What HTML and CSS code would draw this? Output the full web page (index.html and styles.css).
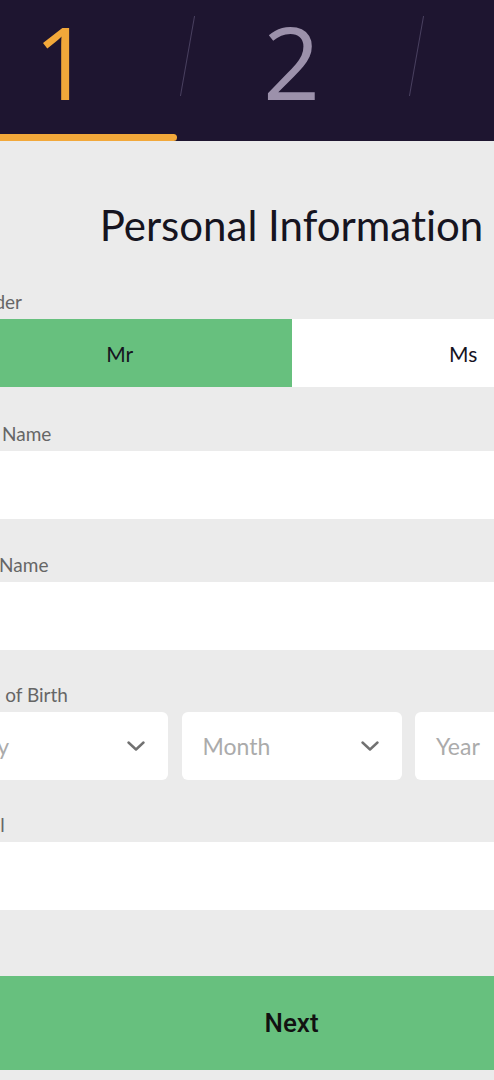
FILE: index.html
```html
<!DOCTYPE html>
<html lang="en">

<head>
    <meta charset="UTF-8">
    <meta name="viewport" content="width=device-width, initial-scale=1.0">
    <title>Registration</title>
    <link rel="stylesheet" href="styles.css">
</head>

<body>

    <header class="stepbar">
        <div class="steps">
            <div class="step active">1</div>
            <div class="step">2</div>
            <div class="step">3</div>
        </div>
    </header>

    <main class="form-wrap">
        <h1 class="title">Personal Information</h1>

        <div class="field first">
            <label>Gender</label>
            <div class="toggle">
                <button class="toggle-btn selected">Mr</button>
                <button class="toggle-btn">Ms</button>
            </div>
        </div>

        <div class="field">
            <label for="firstName">First Name</label>
            <input type="text" id="firstName" class="input">
        </div>

        <div class="field">
            <label for="lastName">Last Name</label>
            <input type="text" id="lastName" class="input">
        </div>

        <div class="field">
            <label>Date of Birth</label>
            <div class="dob">
                <div class="select">
                    <span>Day</span>
                    <svg width="18" height="10" viewBox="0 0 18 10"><path d="M1.5 1.5 L9 8.5 L16.5 1.5" fill="none" stroke="#717171" stroke-width="2.4" stroke-linecap="round" stroke-linejoin="round"/></svg>
                </div>
                <div class="select">
                    <span>Month</span>
                    <svg width="18" height="10" viewBox="0 0 18 10"><path d="M1.5 1.5 L9 8.5 L16.5 1.5" fill="none" stroke="#717171" stroke-width="2.4" stroke-linecap="round" stroke-linejoin="round"/></svg>
                </div>
                <div class="select">
                    <span>Year</span>
                    <svg width="18" height="10" viewBox="0 0 18 10"><path d="M1.5 1.5 L9 8.5 L16.5 1.5" fill="none" stroke="#717171" stroke-width="2.4" stroke-linecap="round" stroke-linejoin="round"/></svg>
                </div>
            </div>
        </div>

        <div class="field">
            <label for="email">Email</label>
            <input type="email" id="email" class="input">
        </div>

        <button class="next-btn">Next</button>
    </main>

</body>

</html>
```

FILE: styles.css
```css
/* General Reset */
* {
    box-sizing: border-box;
}

body {
    margin: 0;
    background: #ebebeb;
    font-family: Lato, "Open Sans", sans-serif;
    font-variant-ligatures: none;
    overflow: hidden;
    color: #16141f;
}

/* Step bar */
.stepbar {
    background: #1e1530;
    height: 141px;
}

.steps {
    display: flex;
    width: 687px;
    margin-left: -52px;
    height: 141px;
}

.step {
    position: relative;
    width: 229px;
    flex: none;
    text-align: center;
    font-family: "Open Sans", sans-serif;
    font-size: 100px;
    line-height: 123px;
    color: #9c91ab;
}

.step.active {
    color: #f2a83a;
}

.step.active::before {
    content: "";
    position: absolute;
    left: 0;
    right: 0;
    bottom: 0;
    height: 7px;
    background: #f2a83a;
    border-radius: 0 4px 4px 0;
}

.step::after {
    content: "";
    position: absolute;
    top: 16px;
    right: -11px;
    width: 1px;
    height: 80px;
    background: #4a4160;
    transform: skewX(-10deg);
}

.step:last-child::after {
    display: none;
}

/* Form */
.form-wrap {
    width: 687px;
    margin-left: -52px;
}

.title {
    margin: 60px 0 0;
    text-align: center;
    font-weight: 400;
    font-size: 42px;
    line-height: 48px;
}

.field {
    margin-top: 33.3px;
}

.field.first {
    margin-top: 41px;
    padding-bottom: 2px;
}

.field label {
    display: block;
    padding-left: 12px;
    font-size: 19px;
    line-height: 24px;
    color: #666;
    margin-bottom: 5px;
}

.toggle {
    display: flex;
}

.toggle-btn {
    flex: 1;
    height: 68px;
    border: none;
    margin: 0;
    background: #fff;
    font-family: inherit;
    font-size: 21px;
    color: #16141f;
    cursor: pointer;
}

.toggle-btn.selected {
    background: #67c07e;
}

.input {
    display: block;
    width: 100%;
    height: 68px;
    border: none;
    background: #fff;
    font-family: inherit;
    font-size: 20px;
}

.dob {
    display: grid;
    grid-template-columns: repeat(3, 1fr);
    gap: 13.5px;
}

.select {
    display: flex;
    align-items: center;
    justify-content: space-between;
    height: 68px;
    padding: 0 23px 0 21px;
    background: #fff;
    border-radius: 6px;
    font-size: 23px;
    color: #ababab;
}

.next-btn {
    display: block;
    width: 100%;
    height: 94px;
    margin-top: 66px;
    border: none;
    background: #67c07e;
    font-family: Roboto, sans-serif;
    font-weight: 500;
    font-size: 26px;
    color: #111;
    cursor: pointer;
}
```
